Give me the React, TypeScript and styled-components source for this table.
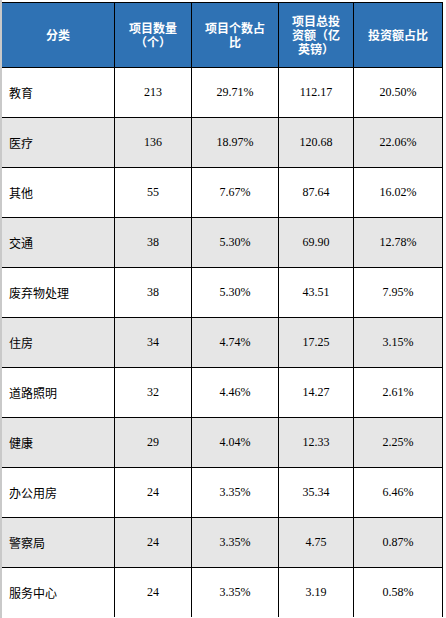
import React from 'react';
import styled, { createGlobalStyle } from 'styled-components';

const GlobalStyle = createGlobalStyle`
  html, body {
    margin: 0;
    padding: 0;
    background: #ffffff;
  }
  body {
    font-family: "Liberation Serif", "Noto Sans CJK SC", serif;
  }
`;

const Page = styled.div`
  border-left: 2px solid #c9c9c9;
  padding-top: 2px;
  height: 616px;
  overflow: hidden;
`;

const Grid = styled.div`
  display: grid;
  grid-template-columns: 112px 76px 86px 74px 88px;
  gap: 1px;
  width: fit-content;
  background: #000000;
  padding: 1px 1px 0 0;
`;

const HeadCell = styled.div`
  height: 64px;
  box-sizing: border-box;
  padding: 0 10px;
  background: #2f72b4;
  color: #ffffff;
  font-family: "Noto Sans CJK SC", sans-serif;
  font-weight: 700;
  font-size: 12px;
  line-height: 14px;
  display: flex;
  align-items: center;
  justify-content: center;
  text-align: center;
  word-break: break-all;
`;

const Cell = styled.div<{ $shaded: boolean; $left?: boolean }>`
  height: 49px;
  box-sizing: border-box;
  padding: ${(p) => (p.$left ? '0 0 0 7px' : '0 4px')};
  background: ${(p) => (p.$shaded ? '#e6e6e6' : '#ffffff')};
  color: #000000;
  font-family: ${(p) =>
    p.$left ? '"Noto Sans CJK SC", sans-serif' : '"Liberation Serif", serif'};
  font-size: 12px;
  display: flex;
  align-items: center;
  justify-content: ${(p) => (p.$left ? 'flex-start' : 'center')};
`;

const headers = ['分类', '项目数量（个）', '项目个数占比', '项目总投资额（亿英镑）', '投资额占比'];

const rows = [
  ['教育', '213', '29.71%', '112.17', '20.50%'],
  ['医疗', '136', '18.97%', '120.68', '22.06%'],
  ['其他', '55', '7.67%', '87.64', '16.02%'],
  ['交通', '38', '5.30%', '69.90', '12.78%'],
  ['废弃物处理', '38', '5.30%', '43.51', '7.95%'],
  ['住房', '34', '4.74%', '17.25', '3.15%'],
  ['道路照明', '32', '4.46%', '14.27', '2.61%'],
  ['健康', '29', '4.04%', '12.33', '2.25%'],
  ['办公用房', '24', '3.35%', '35.34', '6.46%'],
  ['警察局', '24', '3.35%', '4.75', '0.87%'],
  ['服务中心', '24', '3.35%', '3.19', '0.58%'],
];

export default function App() {
  return (
    <>
      <GlobalStyle />
      <Page>
        <Grid>
          {headers.map((h) => (
            <HeadCell key={h}>{h}</HeadCell>
          ))}
          {rows.map((row, i) =>
            row.map((value, j) => (
              <Cell key={`${i}-${j}`} $shaded={i % 2 === 1} $left={j === 0}>
                {value}
              </Cell>
            ))
          )}
        </Grid>
      </Page>
    </>
  );
}
